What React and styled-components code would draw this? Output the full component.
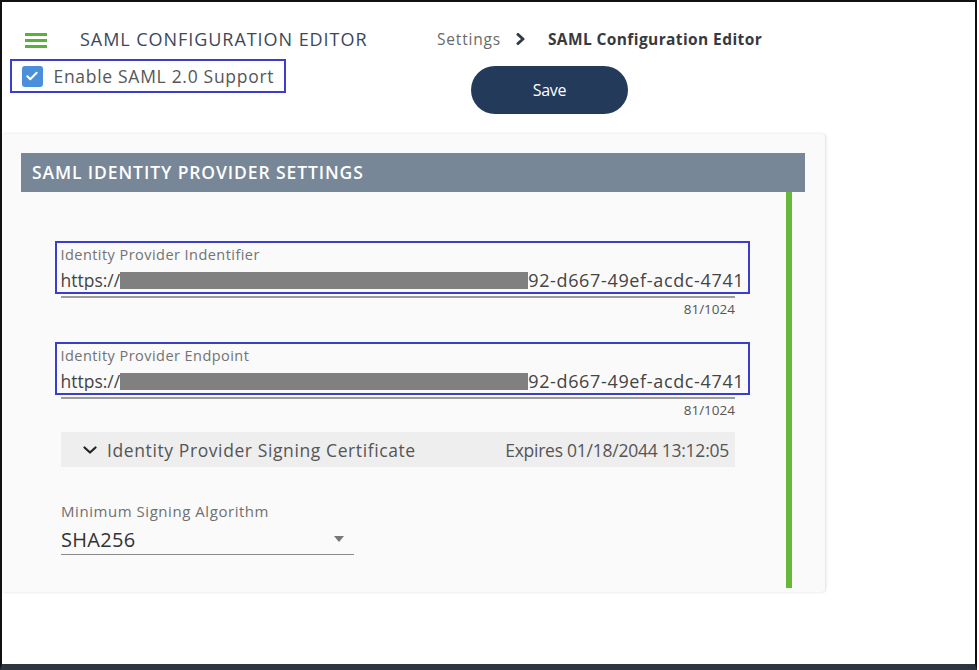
import React from "react"
import styled, { createGlobalStyle } from "styled-components"

const GlobalStyle = createGlobalStyle`
  body {
    margin: 0;
    background: #fff;
    font-family: "Open Sans", "Noto Sans", sans-serif;
  }
`

const Frame = styled.div`
  width: 977px;
  height: 670px;
  box-sizing: border-box;
  border: 2px solid #111;
  border-bottom: 6px solid #2c3641;
  background: #fff;
  overflow: hidden;
`

const Top = styled.div`
  display: grid;
  grid-template-columns: 435px 1fr;
  grid-template-rows: 57px auto;
`

const TitleRow = styled.div`
  display: flex;
  align-items: center;
  padding: 27px 0 0 23px;
  height: 20px;
`

const Hamburger = styled.span`
  display: flex;
  flex-direction: column;
  gap: 3.5px;
  width: 22px;
  margin-top: 3px;

  & > i {
    display: block;
    height: 2.5px;
    background: #56b33a;
  }
`

const Title = styled.h1`
  margin: 0 0 0 33px;
  font-size: 18px;
  font-weight: 500;
  color: #3b4858;
  letter-spacing: 0.95px;
  line-height: 20px;
  white-space: nowrap;
`

const Crumbs = styled.nav`
  display: flex;
  align-items: center;
  padding-top: 27px;
  height: 20px;
  font-size: 15.5px;
  line-height: 20px;
  white-space: nowrap;
`

const CrumbLink = styled.span`
  color: #6a6a6a;
  letter-spacing: 0.8px;
`

const CrumbSep = styled.span`
  display: flex;
  margin: 0 22px 0 15px;
`

const CrumbCurrent = styled.span`
  color: #363a40;
  font-weight: 700;
  letter-spacing: 0.4px;
`

const Annotated = styled.div`
  box-sizing: border-box;
  border: 2.5px solid #3a3ecd;
`

const CheckBoxRow = styled(Annotated)`
  display: flex;
  align-items: center;
  gap: 11px;
  width: 276px;
  height: 34px;
  margin-left: 8px;
  padding-left: 9.5px;
`

const CheckBox = styled.span`
  display: flex;
  align-items: center;
  justify-content: center;
  width: 21px;
  height: 21px;
  border-radius: 3px;
  background: #4a8fdc;
`

const CheckLabel = styled.span`
  font-size: 17.5px;
  color: #575757;
  letter-spacing: 0.7px;
  white-space: nowrap;
`

const SaveButton = styled.button`
  width: 157px;
  height: 48px;
  margin: 7px 0 0 34px;
  border: 0;
  border-radius: 24px;
  background: #243a5a;
  color: #fff;
  font-family: inherit;
  font-size: 16px;
  letter-spacing: -0.3px;
`

const Card = styled.section`
  box-sizing: border-box;
  width: 823px;
  height: 458px;
  margin-top: 20px;
  padding: 19px 0 0 19px;
  background: #fafafa;
  border-radius: 0 4px 4px 0;
  box-shadow: 1px 0 3px rgba(0, 0, 0, 0.14);
`

const SectionHeader = styled.h2`
  box-sizing: border-box;
  width: 784px;
  height: 39px;
  margin: 0;
  padding-left: 11px;
  background: #778797;
  color: #fff;
  font-size: 17.5px;
  font-weight: 600;
  letter-spacing: 0.9px;
  line-height: 39px;
`

const SectionBody = styled.div`
  box-sizing: border-box;
  width: 771px;
  height: 396px;
  padding: 49px 0 0 40px;
  border-right: 6px solid #67b73a;
`

const Field = styled.div`
  width: 674px;
  margin-top: ${({ $gap }) => $gap || 0}px;
`

const FieldBox = styled(Annotated)`
  width: 695px;
  height: 53px;
  margin-left: -6px;
  padding: 3px 3px 0 3.5px;
`

const FieldLabel = styled.div`
  font-size: 14.5px;
  line-height: 17px;
  letter-spacing: 0.45px;
  color: #737373;
`

const FieldValue = styled.div`
  display: flex;
  align-items: center;
  margin-top: 7px;
  overflow: hidden;
  white-space: nowrap;
  font-size: 17.5px;
  line-height: 20px;
  color: #444;
`

const Redacted = styled.span`
  flex: none;
  width: 408px;
  height: 17px;
  background: #808080;
`

const Tail = styled.span`
  font-size: 18px;
  letter-spacing: 0.65px;
`

const Underline = styled.div`
  height: 2px;
  margin-top: 2px;
  background: #9c9c9c;
`

const Counter = styled.div`
  margin-top: 3px;
  text-align: right;
  font-size: 13.5px;
  line-height: 16px;
  color: #555;
`

const Expansion = styled.div`
  display: flex;
  align-items: center;
  box-sizing: border-box;
  width: 674px;
  height: 35px;
  margin-top: 14px;
  padding: 0 6px 0 22px;
  background: #eeeeee;
  font-size: 17.5px;
  color: #555;
  white-space: nowrap;
`

const ExpansionTitle = styled.span`
  margin-left: 10px;
  letter-spacing: 0.6px;
`

const Expires = styled.span`
  margin-left: auto;
  letter-spacing: -0.25px;
`

const SelectLabel = styled.div`
  margin-top: 36px;
  font-size: 15px;
  line-height: 17px;
  letter-spacing: 0.55px;
  color: #707070;
`

const Select = styled.div`
  display: flex;
  align-items: center;
  justify-content: space-between;
  width: 293px;
  height: 28px;
  padding: 5px 0 1px;
  border-bottom: 1.5px solid #8a8a8a;
  font-size: 20px;
  letter-spacing: 0.3px;
  color: #333;
`

const Caret = styled.span`
  width: 0;
  height: 0;
  margin-right: 10px;
  border-left: 5px solid transparent;
  border-right: 5px solid transparent;
  border-top: 6px solid #777;
`

const Chevron = ({ width, height, color, stroke, dir = "down" }) => (
  <svg
    width={width}
    height={height}
    viewBox={dir === "down" ? "0 0 14 8" : "0 0 10 12"}
    fill="none"
    stroke={color}
    strokeWidth={stroke}
    strokeLinecap="round"
    strokeLinejoin="round"
  >
    {dir === "down" ? <path d="M1.5 1.5l5.5 5 5.5-5" /> : <path d="M2 1.5l5 4.5-5 4.5" />}
  </svg>
)

const UrlField = ({ label, gap }) => (
  <Field $gap={gap}>
    <FieldBox>
      <FieldLabel>{label}</FieldLabel>
      <FieldValue>
        https://
        <Redacted />
        <Tail>92-d667-49ef-acdc-47418f3</Tail>
      </FieldValue>
    </FieldBox>
    <Underline />
    <Counter>81/1024</Counter>
  </Field>
)

const App = () => {
  return (
    <Frame>
      <GlobalStyle />
      <Top>
        <TitleRow>
          <Hamburger>
            <i />
            <i />
            <i />
          </Hamburger>
          <Title>SAML CONFIGURATION EDITOR</Title>
        </TitleRow>
        <Crumbs>
          <CrumbLink>Settings</CrumbLink>
          <CrumbSep>
            <Chevron dir="right" width={10} height={12} color="#2f3a45" stroke={3} />
          </CrumbSep>
          <CrumbCurrent>SAML Configuration Editor</CrumbCurrent>
        </Crumbs>
        <div>
          <CheckBoxRow>
            <CheckBox>
              <svg width="14" height="14" viewBox="0 0 24 24" fill="none" stroke="#fff" strokeWidth="3.5" strokeLinecap="round" strokeLinejoin="round">
                <path d="M4 12.5l5 5L20 6.5" />
              </svg>
            </CheckBox>
            <CheckLabel>Enable SAML 2.0 Support</CheckLabel>
          </CheckBoxRow>
        </div>
        <div>
          <SaveButton>Save</SaveButton>
        </div>
      </Top>
      <Card>
        <SectionHeader>SAML IDENTITY PROVIDER SETTINGS</SectionHeader>
        <SectionBody>
          <UrlField label="Identity Provider Indentifier" />
          <UrlField label="Identity Provider Endpoint" gap={25} />
          <Expansion>
            <Chevron width={14} height={8} color="#222" stroke={2.2} />
            <ExpansionTitle>Identity Provider Signing Certificate</ExpansionTitle>
            <Expires>Expires 01/18/2044 13:12:05</Expires>
          </Expansion>
          <SelectLabel>Minimum Signing Algorithm</SelectLabel>
          <Select>
            SHA256
            <Caret />
          </Select>
        </SectionBody>
      </Card>
    </Frame>
  )
}

export default App
